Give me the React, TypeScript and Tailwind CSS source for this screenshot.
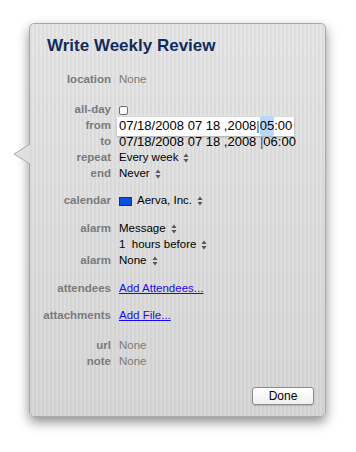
const labelCls =
  "w-[81px] shrink-0 text-right text-[11.5px] font-bold text-[#7b7b7b]";

function Stepper() {
  return (
    <svg width="6" height="10" viewBox="0 0 6 10" className="ml-[5px] inline-block">
      <polygon points="3,0.5 5.5,4 0.5,4" fill="#555" />
      <polygon points="0.5,6 5.5,6 3,9.5" fill="#555" />
    </svg>
  );
}

function Row({
  label,
  children,
  className = "",
}: {
  label?: string;
  children: React.ReactNode;
  className?: string;
}) {
  return (
    <div className={`flex h-4 items-center gap-2 ${className}`}>
      <div className={labelCls}>{label}</div>
      <div className="flex items-center text-[11.5px] text-black">{children}</div>
    </div>
  );
}

export default function App() {
  return (
    <div
      className="h-[452px] w-[356px] bg-white pl-[29px] pt-[23px]"
      style={{ fontFamily: '"Liberation Sans", Arial, sans-serif' }}
    >
      <div className="relative h-[394px] w-[297px] rounded-[5px] border border-[#a9a9a9] bg-[repeating-linear-gradient(90deg,rgba(0,0,0,0.035)_0px,rgba(0,0,0,0.035)_2px,transparent_2px,transparent_4px),linear-gradient(#e6e6e6,#d8d8d8)] shadow-[0_5px_12px_rgba(0,0,0,0.45)]">
        {/* popover pointer */}
        <svg
          width="18"
          height="22"
          viewBox="0 0 18 22"
          className="absolute left-[-17px] top-[119px]"
        >
          <polygon points="1,11 17,1 17,21" fill="#dfdfdf" />
          <polyline points="17,1 1,11 17,21" fill="none" stroke="#a9a9a9" strokeWidth="1" />
        </svg>

        <div className="pl-[17px] pt-[12px] text-[17px] font-bold leading-5 text-[#122b5c]">
          Write Weekly Review
        </div>

        <Row label="location" className="mt-[16px]">
          <span className="text-[#7b7b7b]">None</span>
        </Row>

        <Row label="all-day" className="mt-[14px]">
          <span className="h-[9px] w-[9px] rounded-[2px] border border-[#707070] bg-white" />
        </Row>
        <Row label="from">
          <span className="-ml-[2px] flex h-[19px] w-[177px] items-center bg-white pl-[2px] text-[13px] shadow-[0_1px_2px_rgba(0,0,0,0.25)]">
            07/18/2008 07 18 ,2008 <span className="text-[#3a3aa0]">|</span>
            <span className="rounded-[2px] bg-[#b9d6fb]">05</span>:00
          </span>
        </Row>
        <Row label="to">
          <span className="text-[13px]">
            07/18/2008 07 18 ,2008 <span className="text-[#3a3aa0]">|</span>06:00
          </span>
        </Row>
        <Row label="repeat">
          Every week
          <Stepper />
        </Row>
        <Row label="end">
          Never
          <Stepper />
        </Row>

        <Row label="calendar" className="mt-[11px]">
          <span className="mr-[5px] h-[9px] w-[13px] border border-[#1b2f6a] bg-[#0b4fe0]" />
          Aerva, Inc.
          <Stepper />
        </Row>

        <Row label="alarm" className="mt-[12px]">
          Message
          <Stepper />
        </Row>
        <Row>
          1&nbsp; hours before
          <Stepper />
        </Row>
        <Row label="alarm">
          None
          <Stepper />
        </Row>

        <Row label="attendees" className="mt-[12px]">
          <span className="text-[#1a0cf0] underline">Add Attendees...</span>
        </Row>
        <Row label="attachments" className="mt-[11px]">
          <span className="text-[#1a0cf0] underline">Add File...</span>
        </Row>

        <Row label="url" className="mt-[14px]">
          <span className="text-[#7b7b7b]">None</span>
        </Row>
        <Row label="note">
          <span className="text-[#7b7b7b]">None</span>
        </Row>

        <div className="mt-[17px] flex justify-end pr-[11px]">
          <button className="h-[18px] w-[62px] rounded-[3px] border border-[#8a8a8a] bg-[linear-gradient(#ffffff,#f0f0f0)] text-[12px] leading-none text-black shadow-[0_1px_1px_rgba(0,0,0,0.15)]">
            Done
          </button>
        </div>
      </div>
    </div>
  );
}
